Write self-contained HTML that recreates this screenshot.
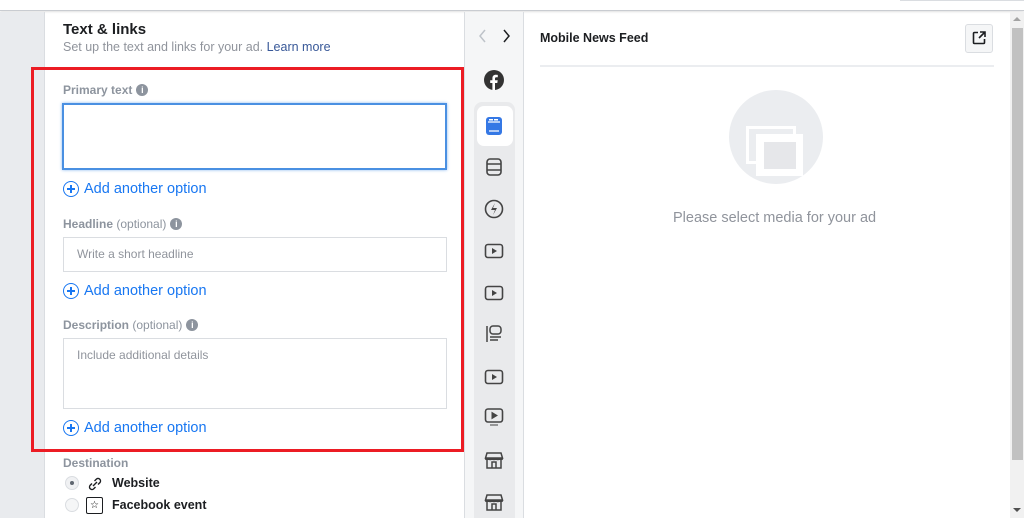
<!DOCTYPE html>
<html><head><meta charset="utf-8"><style>
*{margin:0;padding:0;box-sizing:border-box}
body{width:1024px;height:518px;overflow:hidden;background:#fff;font-family:"Liberation Sans",Arial,sans-serif;position:relative}
.a{position:absolute}
.lbl{font-size:12px;font-weight:bold;color:#8d949e}
.lbl span{font-weight:normal}
.info{display:inline-block;width:12px;height:12px;border-radius:50%;background:#8d949e;color:#fff;font-size:9px;text-align:center;line-height:12px;font-weight:bold;font-style:normal;font-family:"Liberation Sans",sans-serif;vertical-align:1px;margin-left:4px}
.inp{border:1px solid #dadde1;background:#fff;font-size:12px;color:#90949c;padding:9px 13px}
.add{font-size:14.5px;color:#1877f2;display:flex;align-items:center}
.add i{display:inline-block;width:16px;height:16px;border:1.3px solid #1877f2;border-radius:50%;position:relative;margin-right:5px}
.add i:before{content:"";position:absolute;left:3px;top:6.4px;width:7.5px;height:1.3px;background:#1877f2}
.add i:after{content:"";position:absolute;top:3px;left:6.4px;height:7.5px;width:1.3px;background:#1877f2}
.ic{position:absolute;left:484px}
</style></head><body>
<div class="a" style="left:0;top:0;width:1024px;height:11px;background:#fff;border-bottom:1px solid #c9ccd1;box-shadow:0 1px 2px rgba(0,0,0,.12)"></div>
<div class="a" style="left:900px;top:0;width:124px;height:1px;background:#dadde1"></div>
<div class="a" style="left:0;top:12px;width:45px;height:506px;background:#e9ebee;border-right:1px solid #dadde1"></div>
<div class="a" style="left:464px;top:12px;width:60px;height:506px;background:#f5f6f7;border-left:1px solid #dadde1;border-right:1px solid #dadde1"></div>
<div class="a" style="left:474px;top:102px;width:41px;height:416px;background:#e9eaec;border-radius:8px 8px 0 0"></div>
<div class="a" style="left:477px;top:106px;width:36px;height:40px;background:#fff;border-radius:7px"></div>

<div class="a" style="left:63px;top:21px;font-size:15px;font-weight:bold;color:#1c1e21">Text &amp; links</div>
<div class="a" style="left:63px;top:40px;font-size:12.5px;color:#90949c">Set up the text and links for your ad. <span style="color:#385898">Learn more</span></div>

<div class="a" style="left:31px;top:67px;width:433px;height:385px;border:3px solid #ec1c24"></div>

<div class="a lbl" style="left:63px;top:83px">Primary text<i class="info">i</i></div>
<div class="a" style="left:62px;top:103px;width:385px;height:67px;border:2px solid #4a90e2;box-shadow:0 0 3px #8ab8f0"></div>
<div class="a add" style="left:63px;top:181px"><i></i>Add another option</div>

<div class="a lbl" style="left:63px;top:217px">Headline <span>(optional)</span><i class="info">i</i></div>
<div class="a inp" style="left:63px;top:237px;width:384px;height:35px">Write a short headline</div>
<div class="a add" style="left:63px;top:283px"><i></i>Add another option</div>

<div class="a lbl" style="left:63px;top:318px">Description <span>(optional)</span><i class="info">i</i></div>
<div class="a inp" style="left:63px;top:338px;width:384px;height:71px">Include additional details</div>
<div class="a add" style="left:63px;top:420px"><i></i>Add another option</div>

<div class="a lbl" style="left:63px;top:456px">Destination</div>
<div class="a" style="left:65px;top:476px;width:14px;height:14px;border-radius:50%;background:#f0f1f3;border:1px solid #dadde1"><div style="width:4px;height:4px;background:#606770;border-radius:50%;margin:4px"></div></div>
<svg class="a" style="left:86px;top:475px" width="18" height="18" viewBox="0 0 18 18" fill="none" stroke="#1c1e21" stroke-width="1.4"><path d="M7 11l4-4M6 8.5l-2 2a2.5 2.5 0 003.5 3.5l2-2M12 9.5l2-2A2.5 2.5 0 0010.5 4l-2 2"/></svg>
<div class="a" style="left:112px;top:476px;font-size:12.5px;font-weight:bold;color:#1c1e21">Website</div>
<div class="a" style="left:65px;top:498px;width:14px;height:14px;border-radius:50%;background:#f5f6f7;border:1px solid #dadde1"></div>
<div class="a" style="left:86px;top:497px;width:17px;height:17px;border:1.4px solid #1c1e21;border-radius:2px;font-size:10px;text-align:center;line-height:15px">☆</div>
<div class="a" style="left:112px;top:498px;font-size:12.5px;font-weight:bold;color:#1c1e21">Facebook event</div>

<!-- icon column -->
<svg class="a" style="left:477px;top:28px" width="40" height="16" fill="none" stroke-width="1.5"><path d="M8 2L3 8l5 6" stroke="#bec3c9"/><path d="M27 2l5 6-5 6" stroke="#1c1e21"/></svg>
<svg class="ic" style="top:70px" width="20" height="20" viewBox="0 0 20 20"><circle cx="10" cy="10" r="10" fill="#333"/><path d="M11 20v-7h2.3l.4-2.7H11V8.6c0-.8.3-1.3 1.4-1.3h1.4V4.9a18 18 0 00-2-.1c-2 0-3.4 1.2-3.4 3.5v2H6.2V13h2.2v7z" fill="#fff"/></svg>
<svg class="ic" style="top:116px" width="20" height="20" viewBox="0 0 20 20"><rect x="2" y="1" width="16" height="18" rx="3" fill="#3578e5"/><path d="M4 6h12M5 15h10" stroke="#fff" stroke-width="1.3"/><rect x="5" y="3" width="4" height="1.5" fill="#fff"/><rect x="10" y="3" width="4" height="1.5" fill="#fff"/></svg>
<svg class="ic" style="top:157px" width="20" height="20" viewBox="0 0 20 20" fill="none" stroke="#444" stroke-width="1.6"><rect x="3" y="2" width="14" height="16" rx="3"/><path d="M3 7h14M3 13h14"/></svg>
<svg class="ic" style="top:199px" width="20" height="20" viewBox="0 0 20 20" fill="none" stroke="#444" stroke-width="1.6"><circle cx="10" cy="10" r="8.5"/><path d="M11 4l-4 7h4l-2 5 4-7H9z" fill="#444" stroke="none"/></svg>
<svg class="ic" style="top:241px" width="20" height="20" viewBox="0 0 20 20"><rect x="1.5" y="3.5" width="17" height="13" rx="2.5" fill="none" stroke="#444" stroke-width="1.6"/><path d="M8 7v6l5-3z" fill="#444"/></svg>
<svg class="ic" style="top:283px" width="20" height="20" viewBox="0 0 20 20"><rect x="1.5" y="3.5" width="17" height="13" rx="2.5" fill="none" stroke="#444" stroke-width="1.6"/><path d="M8 7v6l5-3z" fill="#444"/></svg>
<svg class="ic" style="top:324px" width="20" height="20" viewBox="0 0 20 20" fill="none" stroke="#444" stroke-width="1.5"><path d="M3 2v16"/><rect x="6" y="2" width="11" height="8" rx="3"/><path d="M6 13h11M6 16h8"/></svg>
<svg class="ic" style="top:367px" width="20" height="20" viewBox="0 0 20 20"><rect x="1.5" y="3.5" width="17" height="13" rx="2.5" fill="none" stroke="#444" stroke-width="1.6"/><path d="M8 7v6l5-3z" fill="#444"/></svg>
<svg class="ic" style="top:407px" width="20" height="20" viewBox="0 0 20 20"><rect x="1.5" y="2" width="17" height="13" rx="2.5" fill="none" stroke="#444" stroke-width="1.6"/><path d="M8 5.5v6l5-3zM6 18h8" fill="#444" stroke="#444" stroke-width="1"/></svg>
<svg class="ic" style="top:450px" width="20" height="20" viewBox="0 0 20 20" fill="none" stroke="#444" stroke-width="1.5"><path d="M3 3h14l1.5 5h-17zM3 8v10h14V8M8 18v-6h4v6M1.5 8c0 2 3 2 3 0 0 2 3.5 2 3.5 0 0 2 4 2 4 0 0 2 3.5 2 3.5 0 0 2 3 2 3 0"/></svg>
<svg class="ic" style="top:492px" width="20" height="20" viewBox="0 0 20 20" fill="none" stroke="#444" stroke-width="1.5"><path d="M3 3h14l1.5 5h-17zM3 8v10h14V8M8 18v-6h4v6M1.5 8c0 2 3 2 3 0 0 2 3.5 2 3.5 0 0 2 4 2 4 0 0 2 3.5 2 3.5 0 0 2 3 2 3 0"/></svg>

<!-- preview -->
<div class="a" style="left:540px;top:31px;font-size:12.5px;font-weight:bold;color:#1c1e21">Mobile News Feed</div>
<div class="a" style="left:965px;top:24px;width:28px;height:29px;border:1px solid #dadde1;border-radius:3px;background:#f5f6f7"></div>
<svg class="a" style="left:971px;top:30px" width="16" height="16" viewBox="0 0 16 16" fill="none" stroke="#1c1e21" stroke-width="1.6"><path d="M7 2.5H3.5a1 1 0 00-1 1v9a1 1 0 001 1h9a1 1 0 001-1V9M9 2h5v5M14 2L8 8"/></svg>
<div class="a" style="left:540px;top:65px;width:454px;height:2px;background:#ebedf0"></div>
<div class="a" style="left:729px;top:90px;width:94px;height:94px;border-radius:50%;background:#ebedf0"></div>
<div class="a" style="left:746px;top:126px;width:50px;height:38px;background:#fff"></div>
<div class="a" style="left:749px;top:129px;width:7px;height:32px;background:#ebedf0"></div>
<div class="a" style="left:749px;top:129px;width:44px;height:5px;background:#ebedf0"></div>
<div class="a" style="left:756px;top:134px;width:47px;height:42px;border:solid #fff;border-width:8px 7px 7px 8px;background:#e6e7ea"></div>
<div class="a" style="left:673px;top:210px;font-size:14.5px;color:#90949c">Please select media for your ad</div>

<!-- scrollbar -->
<div class="a" style="left:1010px;top:12px;width:14px;height:506px;background:#f1f1f1"></div>
<div class="a" style="left:1012px;top:28px;width:11px;height:432px;background:#c1c1c1"></div>
<div class="a" style="left:1013px;top:17px;width:0;height:0;border-left:4px solid transparent;border-right:4px solid transparent;border-bottom:4px solid #a3a3a3"></div>
<div class="a" style="left:1013px;top:508px;width:0;height:0;border-left:4px solid transparent;border-right:4px solid transparent;border-top:4px solid #505050"></div>
</body></html>
